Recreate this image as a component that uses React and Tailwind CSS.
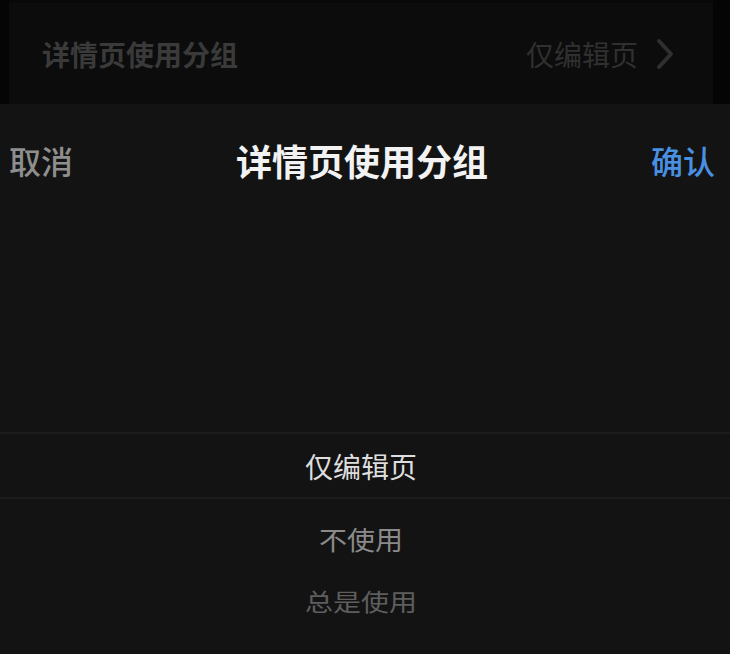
import React, { useState } from "react";

const options = ["仅编辑页", "不使用", "总是使用"];

const App = () => {
  const [selected] = useState(0);

  return (
    <div
      className="w-[730px] h-[654px] bg-[#050505] flex flex-col overflow-hidden"
      style={{ fontFamily: '"Noto Sans CJK SC", "Noto Sans", sans-serif' }}
    >
      {/* dimmed settings row behind the sheet */}
      <div className="ml-[9px] mr-[17px] h-[104px] bg-[#0c0c0c] border-t-[3px] border-[#080808] flex items-center justify-between pl-[33px] pr-[38px]">
        <span className="text-[28px] font-bold text-[#3a3a3a] leading-none">
          详情页使用分组
        </span>
        <div className="flex items-center gap-[18px]">
          <span className="text-[28px] text-[#303030] leading-none">
            仅编辑页
          </span>
          <svg width="19" height="32" viewBox="0 0 19 32" fill="none">
            <polyline
              points="3,3 15,16 3,29"
              stroke="#2f2f2f"
              strokeWidth="4"
              strokeLinecap="round"
              strokeLinejoin="round"
            />
          </svg>
        </div>
      </div>

      {/* bottom sheet */}
      <div className="flex-1 bg-[#131313] flex flex-col">
        <div className="h-[112px] flex items-center justify-between pl-[9px] pr-[15px]">
          <button className="text-[32px] font-medium text-[#8e8e8e] leading-none">
            取消
          </button>
          <h1 className="text-[36px] font-bold text-[#f2f2f2] leading-none">
            详情页使用分组
          </h1>
          <button className="text-[32px] font-medium text-[#4a90e2] leading-none">
            确认
          </button>
        </div>

        <div className="flex-1 flex flex-col pt-[216px]">
          <div className="h-[67px] border-y-2 border-[#1c1c1c] flex items-center justify-center pr-[8px]">
            <span className="text-[28px] text-[#dedede] leading-none">
              {options[selected]}
            </span>
          </div>
          <div className="h-[80px] flex items-center justify-center pr-[8px]">
            <span className="text-[28px] text-[#8a8a8a] leading-none scale-y-95">
              {options[1]}
            </span>
          </div>
          <div className="h-[44px] flex items-center justify-center pr-[8px]">
            <span className="text-[28px] text-[#5e5e5e] leading-none scale-y-[0.85]">
              {options[2]}
            </span>
          </div>
        </div>
      </div>
    </div>
  );
};

export default App;
